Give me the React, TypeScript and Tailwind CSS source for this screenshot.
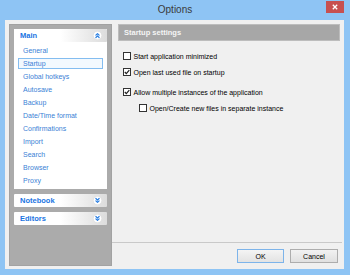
import React from "react";

const font = { fontFamily: '"Liberation Sans", Arial, sans-serif' };

function Chevron({ up }: { up?: boolean }) {
  return (
    <svg width="9" height="9" viewBox="0 0 9 9" className="shrink-0">
      <circle cx="4.5" cy="4.5" r="4.3" fill="#ffffff" stroke="#d6d6d6" strokeWidth="0.6" />
      {up ? (
        <g fill="none" stroke="#2a7fe2" strokeWidth="1.2" strokeLinecap="round" strokeLinejoin="round">
          <path d="M2.9 4.2 L4.5 2.6 L6.1 4.2" />
          <path d="M2.9 6.5 L4.5 4.9 L6.1 6.5" />
        </g>
      ) : (
        <g fill="none" stroke="#2a7fe2" strokeWidth="1.2" strokeLinecap="round" strokeLinejoin="round">
          <path d="M2.9 2.5 L4.5 4.1 L6.1 2.5" />
          <path d="M2.9 4.8 L4.5 6.4 L6.1 4.8" />
        </g>
      )}
    </svg>
  );
}

function SectionHeader({ title, up }: { title: string; up?: boolean }) {
  return (
    <div className="h-[13px] flex items-center justify-between pl-[6px] pr-[5px] bg-gradient-to-r from-white via-white to-[#dcdcdc] rounded-[1px]">
      <span className="text-[7.5px] font-bold text-[#1a74e2] leading-none">{title}</span>
      <Chevron up={up} />
    </div>
  );
}

function Check({ checked, label }: { checked?: boolean; label: string }) {
  return (
    <div className="h-[12px] flex items-center">
      <div className="w-[8px] h-[8px] border border-[#333333] bg-white flex items-center justify-center shrink-0">
        {checked && (
          <svg width="6" height="6" viewBox="0 0 6 6">
            <path d="M0.8 3 L2.3 4.6 L5.3 1.2" fill="none" stroke="#1e1e1e" strokeWidth="1.2" />
          </svg>
        )}
      </div>
      <span className="ml-[2.5px] text-[7px] text-black leading-none whitespace-nowrap">{label}</span>
    </div>
  );
}

const items = [
  "General",
  "Startup",
  "Global hotkeys",
  "Autosave",
  "Backup",
  "Date/Time format",
  "Confirmations",
  "Import",
  "Search",
  "Browser",
  "Proxy",
];

export default function App() {
  return (
    <div className="w-[350px] h-[275px] bg-[#8ec4f4] flex flex-col overflow-hidden" style={font}>
      {/* title bar */}
      <div className="h-[20px] relative flex items-center justify-center shrink-0">
        <span className="text-[10px] text-[#3a3a3a] leading-none">Options</span>
        <div className="absolute right-[6px] top-[1px] w-[18px] h-[12px] bg-[#c75050] flex items-center justify-center">
          <svg width="6" height="6" viewBox="0 0 6 6">
            <path d="M0.8 0.8 L5.2 5.2 M5.2 0.8 L0.8 5.2" stroke="#ffffff" strokeWidth="1.3" />
          </svg>
        </div>
      </div>
      {/* client */}
      <div className="ml-[5px] mr-[6px] mb-[6px] flex-1 bg-[#f0f0f0] flex">
        {/* left panel */}
        <div className="w-[103px] ml-[4px] mt-[4px] mb-[3px] bg-[#ababab] border border-[#a2a2a2] p-[4px] flex flex-col gap-[5px] shrink-0">
          <div className="bg-white flex flex-col">
            <SectionHeader title="Main" up />
            <div className="pt-[2px] pb-[2px]">
              {items.map((it) => (
                <div key={it} className="h-[13px] flex items-center px-[4px]">
                  <div
                    className={
                      "h-[11px] w-full flex items-center pl-[4px] border " +
                      (it === "Startup" ? "border-[#84bdf0] bg-[#f3f9fe]" : "border-transparent")
                    }
                  >
                    <span className="text-[7px] text-[#3b7fd6] leading-none whitespace-nowrap">{it}</span>
                  </div>
                </div>
              ))}
            </div>
          </div>
          <SectionHeader title="Notebook" />
          <SectionHeader title="Editors" />
        </div>
        {/* right */}
        <div className="flex-1 flex flex-col">
          <div className="flex-1 pt-[4px] pl-[6px] pr-[4px]">
            <div className="h-[17px] bg-[#a7a7a7] border border-[#bdbdbd] flex items-center pl-[5px]">
              <span className="text-[7.5px] font-bold text-[#f5f5f5] leading-none">Startup settings</span>
            </div>
            <div className="pl-[5px] flex flex-col">
              <div className="mt-[9px]">
                <Check label="Start application minimized" />
              </div>
              <div className="mt-[4px]">
                <Check checked label="Open last used file on startup" />
              </div>
              <div className="mt-[8px]">
                <Check checked label="Allow multiple instances of the application" />
              </div>
              <div className="mt-[4px] pl-[16px]">
                <Check label="Open/Create new files in separate instance" />
              </div>
            </div>
          </div>
          <div className="h-[27px] border-t border-[#c9c9c9] mr-[2px] flex items-center justify-end gap-[6px] pr-[4px] shrink-0">
            <div className="w-[47px] h-[14px] border border-[#7db4ea] bg-gradient-to-b from-[#f4f4f4] to-[#e3e3e3] flex items-center justify-center">
              <span className="text-[7px] text-black leading-none">OK</span>
            </div>
            <div className="w-[48px] h-[14px] border border-[#adadad] bg-gradient-to-b from-[#f2f2f2] to-[#e0e0e0] flex items-center justify-center">
              <span className="text-[7px] text-black leading-none">Cancel</span>
            </div>
          </div>
        </div>
      </div>
    </div>
  );
}
